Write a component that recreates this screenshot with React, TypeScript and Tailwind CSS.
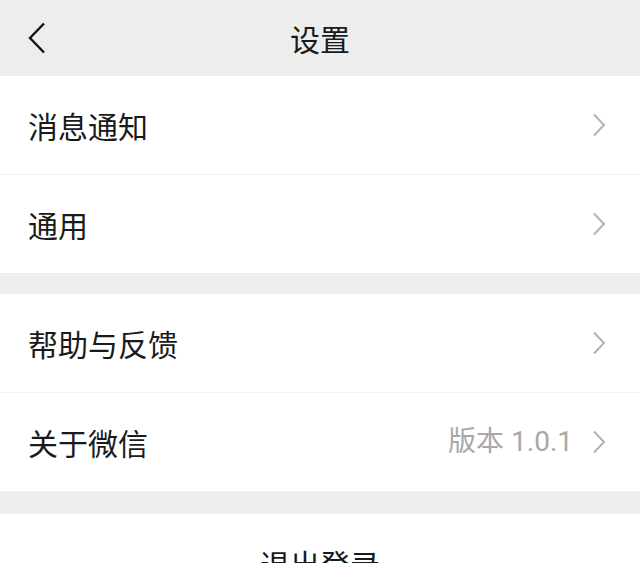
import React from 'react';

const FONT = { fontFamily: '"Noto Sans CJK SC", "Noto Sans", sans-serif' };

function Chevron() {
  return (
    <svg width="16" height="24" viewBox="0 0 16 24" className="text-[#b3b3b3]">
      <path d="M3 1.5 L13 12 L3 22.5" fill="none" stroke="currentColor" strokeWidth="2" />
    </svg>
  );
}

function Row({ label, value, first }: { label: string; value?: string; first?: boolean }) {
  return (
    <div
      className={`flex items-center bg-white pl-7 pr-[33px] ${
        first ? 'h-[99px] border-b border-[#f0f0f0]' : 'h-[98px]'
      }`}
    >
      <span className="flex-1 text-[30px] text-[#1a1a1a]">{label}</span>
      {value && (
        <span
          className="mr-[18px] text-[28px] text-[#a8a8a8]"
          style={{ fontFamily: 'Roboto, "Noto Sans CJK SC", sans-serif' }}
        >
          {value}
        </span>
      )}
      <Chevron />
    </div>
  );
}

export default function App() {
  return (
    <div className="h-[563px] w-[640px] overflow-hidden bg-[#ededed]" style={FONT}>
      <div className="relative flex h-[76px] items-center justify-center">
        <svg width="20" height="32" viewBox="0 0 20 32" className="absolute left-[27px] top-[22px]">
          <path d="M17 1.5 L3 16 L17 30.5" fill="none" stroke="#111" strokeWidth="2.4" />
        </svg>
        <span className="text-[30px] text-[#1a1a1a]">设置</span>
      </div>
      <div>
        <Row label="消息通知" first />
        <Row label="通用" />
      </div>
      <div className="mt-[21px]">
        <Row label="帮助与反馈" first />
        <Row label="关于微信" value="版本 1.0.1" />
      </div>
      <div className="mt-[23px] flex h-[98px] items-center justify-center bg-white">
        <span className="text-[30px] text-[#1a1a1a]">退出登录</span>
      </div>
    </div>
  );
}
